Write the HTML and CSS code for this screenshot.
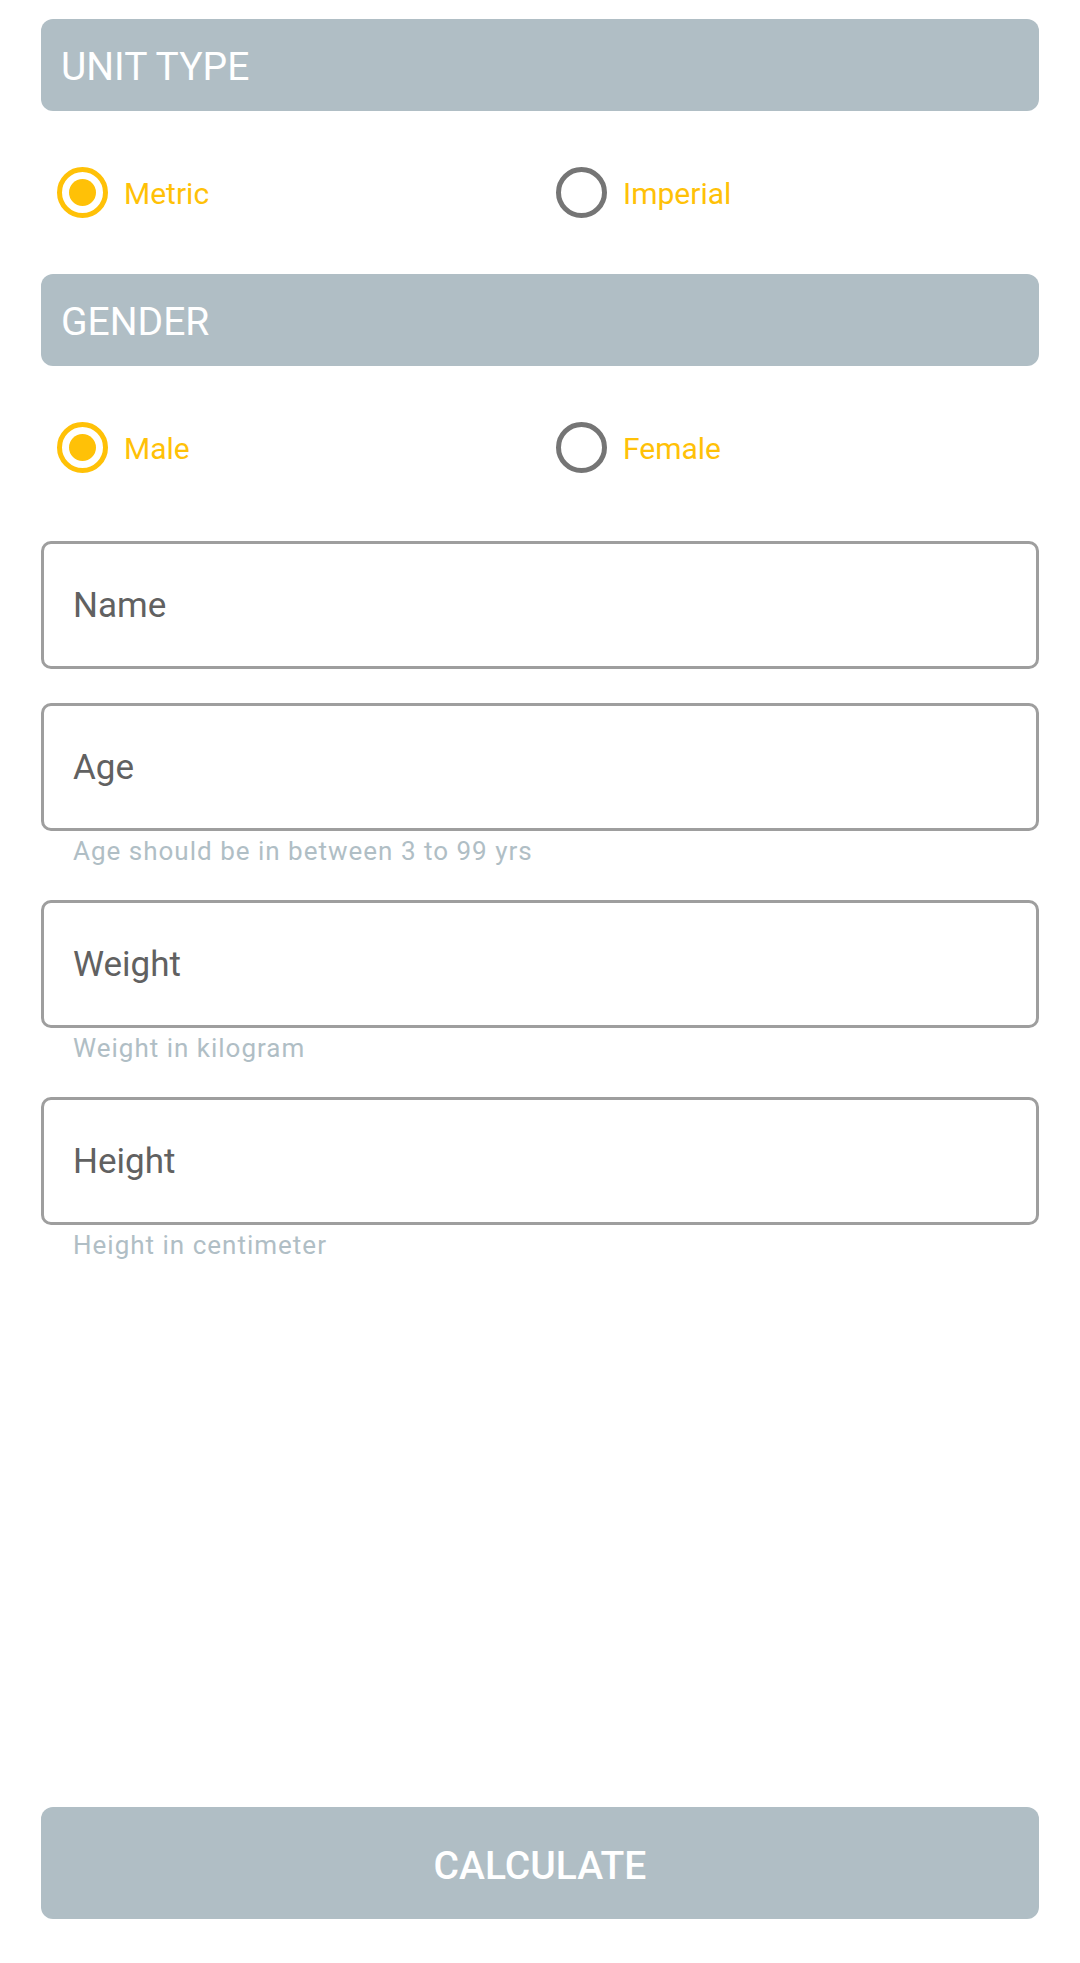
FILE: index.html
```html
<!DOCTYPE html>
<html>
  <head>
    <title>BMI Calculator</title>
    <link rel="stylesheet" href="styles.css">
  </head>

  <body>
    <form class="page" id="bmiForm">
      <div class="section-title">UNIT TYPE</div>
      <div class="radio-row">
        <label class="radio-item">
          <input type="radio" name="unit" value="metric" checked />
          <span class="radio"></span>
          <span class="radio-label">Metric</span>
        </label>
        <label class="radio-item">
          <input type="radio" name="unit" value="imperial" />
          <span class="radio"></span>
          <span class="radio-label">Imperial</span>
        </label>
      </div>

      <div class="section-title">GENDER</div>
      <div class="radio-row">
        <label class="radio-item">
          <input type="radio" name="gender" value="male" checked />
          <span class="radio"></span>
          <span class="radio-label">Male</span>
        </label>
        <label class="radio-item">
          <input type="radio" name="gender" value="female" />
          <span class="radio"></span>
          <span class="radio-label">Female</span>
        </label>
      </div>

      <div class="fields">
        <div class="form-group">
          <input type="text" name="name" placeholder="Name" />
        </div>
        <div class="form-group">
          <input type="number" name="age" placeholder="Age" />
          <div class="helper">Age should be in between 3 to 99 yrs</div>
        </div>
        <div class="form-group">
          <input type="number" name="weight" placeholder="Weight" />
          <div class="helper">Weight in kilogram</div>
        </div>
        <div class="form-group">
          <input type="number" name="height" placeholder="Height" />
          <div class="helper">Height in centimeter</div>
        </div>
      </div>

      <button type="submit" class="button">CALCULATE</button>
    </form>
  </body>
</html>
```

FILE: styles.css
```css
body {
  font-family: Roboto, "Noto Sans", Arial, sans-serif;
  background-color: #ffffff;
  margin: 0;
}

.page {
  display: flex;
  flex-direction: column;
  min-height: 100vh;
  box-sizing: border-box;
  padding: 19px 41px 44px;
}

.section-title {
  background-color: #b0bec5;
  color: #ffffff;
  font-size: 39px;
  height: 92px;
  box-sizing: border-box;
  line-height: 88px;
  padding: 4px 20px 0;
  border-radius: 12px;
}

.radio-row {
  display: grid;
  grid-template-columns: 1fr 1fr;
  height: 163px;
  align-items: center;
}

.radio-item {
  display: flex;
  align-items: center;
  padding-left: 16px;
  cursor: pointer;
}

.radio-item input {
  display: none;
}

.radio {
  width: 51px;
  height: 51px;
  box-sizing: border-box;
  border: 5.5px solid #757575;
  border-radius: 50%;
  display: flex;
  align-items: center;
  justify-content: center;
}

.radio-item input:checked + .radio {
  border-color: #ffc107;
}

.radio-item input:checked + .radio:after {
  content: "";
  width: 27px;
  height: 27px;
  border-radius: 50%;
  background: #ffc107;
}

.radio-label {
  color: #ffc107;
  font-size: 30px;
  margin-left: 16px;
  padding-top: 2px;
}

.fields {
  margin-top: 12px;
}

.form-group {
  margin-bottom: 34px;
}

.form-group input {
  width: 100%;
  height: 128px;
  box-sizing: border-box;
  border: 3px solid #9e9e9e;
  border-radius: 10px;
  padding: 0 29px;
  font-family: inherit;
  font-size: 35px;
  color: #424242;
  outline: none;
  -moz-appearance: textfield;
}

.form-group input::placeholder {
  color: #616161;
}

.form-group input::-webkit-outer-spin-button,
.form-group input::-webkit-inner-spin-button {
  -webkit-appearance: none;
  margin: 0;
}

.helper {
  color: #b0bec5;
  font-size: 26px;
  letter-spacing: 1px;
  line-height: 35px;
  padding: 3px 0 0 32px;
  margin-bottom: -3px;
}

.button {
  margin-top: auto;
  width: 100%;
  height: 112px;
  padding-top: 6px;
  background-color: #b0bec5;
  color: white;
  font-family: inherit;
  font-size: 39px;
  font-weight: 500;
  border: none;
  border-radius: 12px;
  cursor: pointer;
}
```
